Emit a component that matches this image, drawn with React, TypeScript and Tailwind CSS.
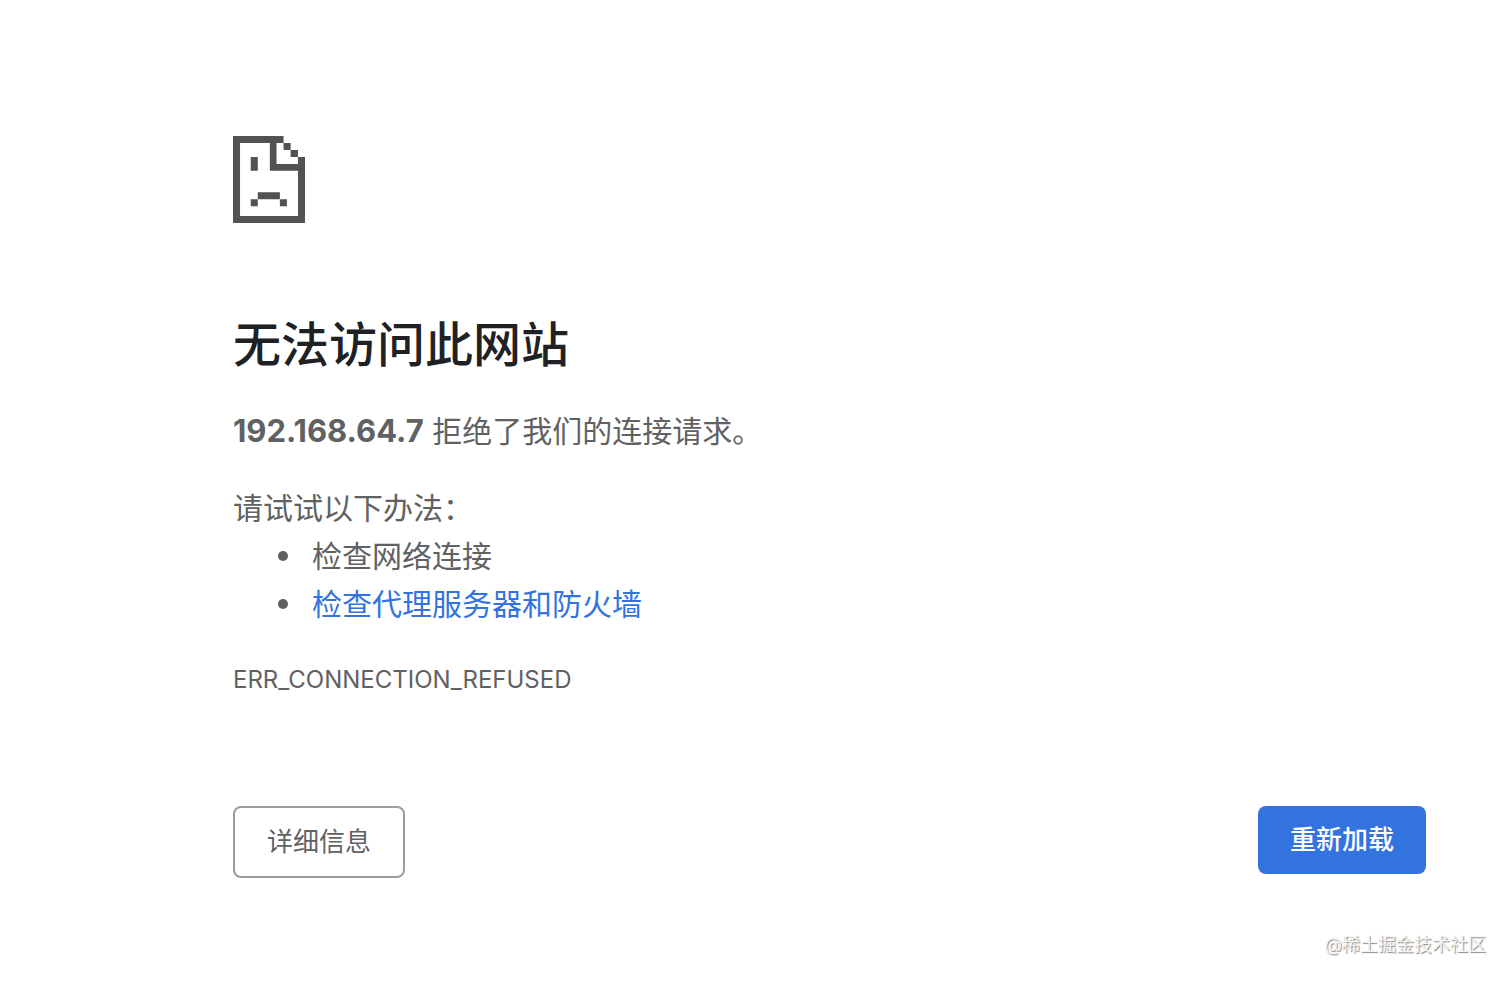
function SadPageIcon() {
  return (
    <svg
      className="h-[87px] w-[72px] fill-[#525252]"
      viewBox="0 0 215 260"
      preserveAspectRatio="none"
      aria-hidden="true"
    >
      <path d="M0 0H151V21H172V42H194V63H215V260H0ZM21 21V239H194V104H110V21ZM130 21V84H194V63H172V42H151V21Z" fillRule="evenodd" />
      <path d="M53 63H74V104H53ZM74 168H140V189H74ZM53 189H74V210H53ZM140 189H161V210H140Z" />
    </svg>
  );
}

const bullet = "flex items-center gap-6 before:size-[10px] before:rounded-full before:bg-[#5f6163] before:content-['']";

export default function App() {
  return (
    <div className="flex min-h-screen flex-col bg-white pt-[136px] font-['Inter','Noto_Sans_CJK_SC',sans-serif] text-[30px] leading-12 text-[#5f6163]" lang="zh-CN">
      <main className="pr-[86px] pl-[233px]">
        <SadPageIcon />
        <h1 className="mt-[92px] text-[48px] leading-[60px] font-medium text-[#202124]">无法访问此网站</h1>
        <p className="mt-8">
          <strong className="text-[31px] font-bold">192.168.64.7</strong> 拒绝了我们的连接请求。
        </p>
        <p className="mt-[29px]">请试试以下办法：</p>
        <ul className="pl-[45px]">
          <li className={bullet}>检查网络连接</li>
          <li className={bullet}>
            <a href="#proxy" className="text-[#3273df]">检查代理服务器和防火墙</a>
          </li>
        </ul>
        <p className="mt-7 text-[24px]">ERR_CONNECTION_REFUSED</p>
        <div className="mt-[102px] flex items-start justify-between text-[26px] leading-10">
          <button type="button" className="h-[72px] rounded-lg border-2 border-[#9a9c9f] px-8">详细信息</button>
          <button type="button" className="h-[68px] rounded-lg bg-[#3273df] px-8 font-medium text-white">重新加载</button>
        </div>
      </main>
      <footer className="mt-auto pr-[26px] pb-[22px] text-right text-[18px] leading-7 text-[#f4f4f4] [text-shadow:1px_1px_1px_#888]">
        @稀土掘金技术社区
      </footer>
    </div>
  );
}
